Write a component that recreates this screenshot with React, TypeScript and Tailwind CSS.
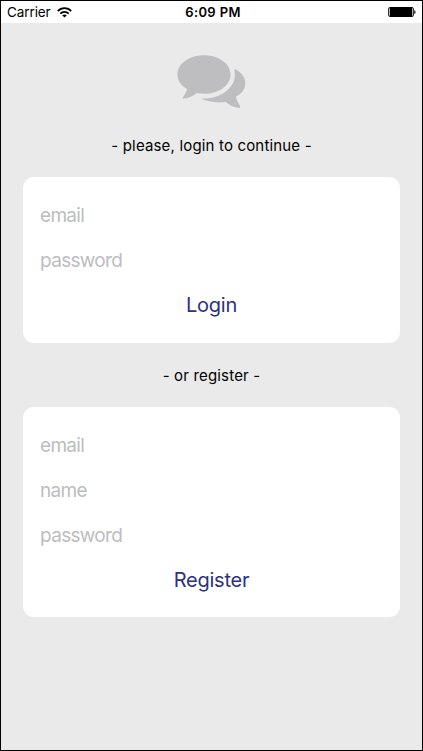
import type { ReactNode } from "react";

function WifiIcon() {
  return (
    <svg width="15" height="11" viewBox="0 0 15 11" fill="none" stroke="#000" strokeWidth="1.7">
      <path d="M.8 4.1C4.4 .2 10.6 .2 14.2 4.1" />
      <path d="M3.3 6.6C5.6 4.2 9.4 4.2 11.7 6.6" />
      <path d="M5.2 8.2C6.5 7.1 8.5 7.1 9.8 8.2L7.5 10.6Z" fill="#000" stroke="none" />
    </svg>
  );
}

function BatteryIcon() {
  return (
    <svg width="28" height="10" viewBox="0 0 28 10">
      <rect x=".5" y=".5" width="25" height="9" rx="1.5" fill="#fff" stroke="#333" />
      <rect x="1.7" y="0" width="22.6" height="10" fill="#000" />
      <path d="M26.2 3.4H27.2Q28 5 27.2 6.8H26.2Z" fill="#222" />
    </svg>
  );
}

function ChatBubbles() {
  return (
    <svg width="70" height="56" viewBox="0 0 70 56" fill="#bebec0">
      <path d="M27 1.2C41.8 1.2 53.6 9.8 53.6 20.5S41.8 39.8 27 39.8C24.5 39.8 22 39.5 19.8 39C15.8 42.4 10.7 44.5 6.2 44.6C5.4 44.6 5.6 43.7 6 43C7.7 41 9.2 38 10.3 35.2C4.2 31.8 .4 26.5 .4 20.5C.4 9.8 12.2 1.2 27 1.2Z" />
      <path d="M57.8 15.1C64.3 18.3 68.3 23.3 68.3 29.2C68.3 34.7 64.7 39.7 58.8 42.8C59.7 46.5 61.5 49.5 62.8 51.4C63.5 52.7 63 54.2 62 54C57.5 53.6 52.6 51.6 48.5 47.8C39.6 49.5 30.5 47.5 24.4 44.8C27.5 44.5 32.5 44.8 37 43.3C49.3 39.6 58.5 31 57.8 20.2C57.7 18 57 16.5 57.8 15.1Z" />
    </svg>
  );
}

function Field({ children }: { children: ReactNode }) {
  return (
    <label className="flex h-[45px] items-center pl-[17px] pt-[2px] text-[19px] tracking-[-0.68px] text-[#bdbdbf]">
      <span>{children}</span>
    </label>
  );
}

function Action({ children }: { children: ReactNode }) {
  return (
    <button className="flex h-[45px] w-full items-center justify-center pb-px text-[20px] tracking-[-0.25px] text-[#2b3187]">
      {children}
    </button>
  );
}

export default function App() {
  return (
    <main className="flex h-[751px] w-[423px] flex-col overflow-hidden border border-black bg-[#eaeaea] font-['Inter',sans-serif] text-black">
      <header className="grid h-[22px] shrink-0 grid-cols-3 items-center bg-white pl-[6px] pr-[6px]">
        <div className="flex items-center gap-[6px]">
          <span className="text-[13.5px] tracking-[-0.1px]">Carrier</span>
          <WifiIcon />
        </div>
        <span className="pl-[3px] pt-px text-center text-[13px] font-semibold tracking-[0.35px]">6:09 PM</span>
        <div className="flex justify-end">
          <BatteryIcon />
        </div>
      </header>
      <div className="flex h-[154px] shrink-0 flex-col items-center pt-[31px]">
        <ChatBubbles />
        <p className="mt-[26px] text-[15px] leading-5 tracking-[0.17px]">- please, login to continue -</p>
      </div>
      <section className="mx-[22px] h-[165.5px] shrink-0 rounded-[11px] bg-white pt-4">
        <Field>email</Field>
        <Field>password</Field>
        <Action>Login</Action>
      </section>
      <div className="flex h-[64.5px] shrink-0 items-center justify-center pt-[2px]">
        <p className="text-[15px] leading-5 tracking-[0.17px]">- or register -</p>
      </div>
      <section className="mx-[22px] h-[210px] shrink-0 rounded-[11px] bg-white pt-4">
        <Field>email</Field>
        <Field>name</Field>
        <Field>password</Field>
        <Action>Register</Action>
      </section>
    </main>
  );
}
